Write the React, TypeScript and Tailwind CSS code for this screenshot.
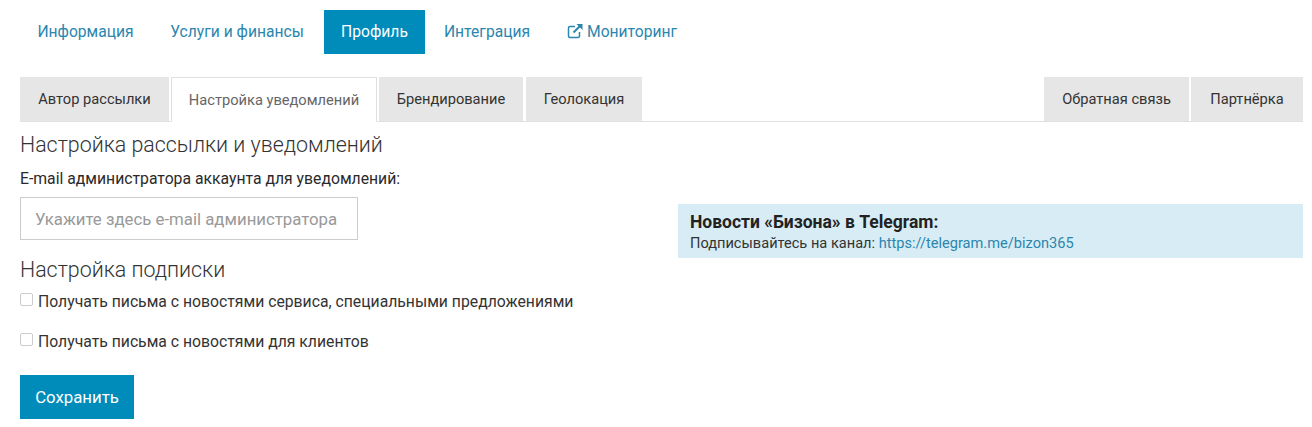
import React from 'react';

const TabItem = ({ label, active, className }: { label: string; active?: boolean; className: string }) => (
  <div
    className={
      active
        ? `h-[45px] -mb-px flex items-center justify-center bg-white border border-[#e0e0e0] border-b-white text-[#666666] ${className}`
        : `h-[44px] flex items-center justify-center bg-[#e6e6e6] text-[#333333] ${className}`
    }
  >
    {label}
  </div>
);

const Check = ({ label, className }: { label: string; className: string }) => (
  <label className={`flex items-center h-[22px] text-[15.75px] text-[#333333] ${className}`}>
    <span className="w-[13px] h-[13px] mr-[5px] -mt-[5px] rounded-[2px] border border-[#cccccc] bg-white" />
    {label}
  </label>
);

export default function App() {
  return (
    <div className="w-[1312px] h-[427px] overflow-hidden bg-white pt-[10px] leading-[22px] text-[#222222] font-['Roboto',sans-serif]">
      {/* Main nav */}
      <nav className="flex items-center h-[44px] pl-[22px] text-[15.65px] text-[#2b86ad]">
        <a className="w-[127px] h-[44px] flex items-center justify-center">Информация</a>
        <a className="ml-[5px] w-[166px] h-[44px] flex items-center justify-center">Услуги и финансы</a>
        <a className="ml-[4px] w-[101px] h-[44px] flex items-center justify-center bg-[#008cba] text-white">Профиль</a>
        <a className="ml-[3px] w-[118px] h-[44px] flex items-center justify-center">Интеграция</a>
        <a className="ml-[5px] pl-[16px] h-[44px] flex items-center">
          <svg viewBox="0 0 16 16" className="w-[16px] h-[16px] mr-[4px] -mt-[2px]" fill="none" stroke="currentColor">
            <path d="M12.5 9v4a1.500 1.500 0 0 1-1.500 1.500H3A1.500 1.500 0 0 1 1.500 13V5A1.500 1.500 0 0 1 3 3.500h5" strokeWidth="1.500" />
            <path d="M6.500 9.500 13 3" strokeWidth="2" />
            <path d="M9.500 1h6v6z" fill="currentColor" stroke="none" />
          </svg>
          Мониторинг
        </a>
      </nav>

      <div className="mt-[23px] ml-[20px] w-[1283px]">
        {/* Tabs */}
        <div className="flex border-b border-[#e0e0e0] h-[45px] text-[14.65px]">
          <TabItem label="Автор рассылки" className="w-[149px]" />
          <TabItem label="Настройка уведомлений" active className="ml-[2px] w-[206px]" />
          <TabItem label="Брендирование" className="ml-[2px] w-[144px]" />
          <TabItem label="Геолокация" className="ml-[3px] w-[116px]" />
          <TabItem label="Обратная связь" className="ml-auto w-[145px]" />
          <TabItem label="Партнёрка" className="ml-[2px] w-[112px]" />
        </div>

        <div className="flex">
          <div className="w-[658px] shrink-0">
            <h2 className="mt-[9px] text-[21.4px] leading-[28px] font-light text-[#333333]">
              Настройка рассылки и уведомлений
            </h2>
            <label className="block mt-[9px] text-[15.75px] leading-[22px] text-[#2a2a2a]">
              E-mail администратора аккаунта для уведомлений:
            </label>
            <input
              placeholder="Укажите здесь e-mail администратора"
              className="block mt-[7px] w-[338px] h-[43px] pl-[14px] pr-0 border border-[#cccccc] text-[16.8px] placeholder:text-[#999999] outline-none"
            />
            <h2 className="mt-[16px] text-[21.4px] leading-[28px] font-light text-[#333333]">
              Настройка подписки
            </h2>
            <Check label="Получать письма с новостями сервиса, специальными предложениями" className="mt-[7px]" />
            <Check label="Получать письма с новостями для клиентов" className="mt-[18px]" />
            <button className="block mt-[22px] w-[114px] h-[44px] bg-[#008cba] text-white text-[16.8px]">
              Сохранить
            </button>
          </div>

          <div className="flex-1 mt-[82px] h-[54px] pl-[12px] pt-[7px] bg-[#d8ecf5]">
            <div className="text-[17.5px] leading-[22px] font-bold text-[#222222]">Новости «Бизона» в Telegram:</div>
            <div className="mt-[1px] text-[14.6px] leading-[19px] text-[#333333]">
              Подписывайтесь на канал: <a className="text-[#2b86ad]">https://telegram.me/bizon365</a>
            </div>
          </div>
        </div>
      </div>
    </div>
  );
}
